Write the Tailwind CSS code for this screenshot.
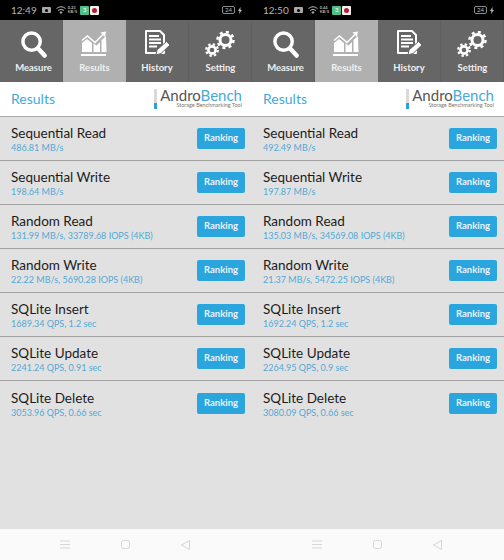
<!DOCTYPE html>
<html lang="en">
<head>
    <meta charset="UTF-8">
    <title>AndroBench Results</title>
    <script src="https://cdn.jsdelivr.net/npm/@tailwindcss/browser@4"></script>
</head>
<body class="bg-[#e2e1e1] font-['Lato',sans-serif]">
    <div id="panels" class="flex w-[504px] h-[560px] overflow-hidden"></div>

    <script>
        // --- ICONS ---
        const ICONS = {
            measure: `<svg width="27" height="29" viewBox="0 0 28 30" fill="none" stroke="white"><circle cx="12" cy="12" r="9" stroke-width="3.6"/><path d="M18.5 19 L25.5 26.5" stroke-width="4.6" stroke-linecap="round"/></svg>`,
            results: `<svg width="28" height="26" viewBox="0 0 28 26" fill="white"><path d="M1 21 V12 L6 8 L11 12 V21 Z M12.500 21 V12.500 L15.500 14.500 L19 11 V21 Z M20.500 21 V9 L25 5 L25.500 21 Z"/><path d="M0 23 H25 V25 H0 Z"/><path d="M1 9.500 L6.500 5 L14 11.500 L22 3.500" fill="none" stroke="white" stroke-width="1.500"/><path d="M19.500 1.500 L25 0.500 L24 6 Z"/></svg>`,
            history: `<svg width="27" height="28" viewBox="0 0 27 28" fill="none"><path d="M2 1 H16 L20 5 V23 H2 Z" stroke="white" stroke-width="2" stroke-linejoin="round"/><path d="M5 6 H15 M5 9.500 H17 M5 13 H17 M5 16.500 H13" stroke="white" stroke-width="2"/><path d="M12 25 L13 20 L22.500 11.500 L26 15 L17 23.500 Z" fill="white" stroke="#666" stroke-width="1"/></svg>`,
            setting: `<svg width="31" height="27" viewBox="0 0 31 27" fill="none" stroke="white"><circle cx="20.500" cy="9" r="5.500" stroke-width="3"/><circle cx="20.500" cy="9" r="8" stroke-width="2.500" stroke-dasharray="3 3.300"/><circle cx="7" cy="19" r="3.600" stroke-width="2.600"/><circle cx="7" cy="19" r="5.800" stroke-width="2.200" stroke-dasharray="2.400 2.150"/></svg>`,
        };

        const TABS = [
            { label: 'Measure', icon: ICONS.measure, shift: 'pl-[5px]' },
            { label: 'Results', icon: ICONS.results, active: true, shift: '' },
            { label: 'History', icon: ICONS.history, shift: '' },
            { label: 'Setting', icon: ICONS.setting, shift: 'pl-[1px]' },
        ];

        const NAMES = ['Sequential Read', 'Sequential Write', 'Random Read', 'Random Write', 'SQLite Insert', 'SQLite Update', 'SQLite Delete'];

        const PANELS = [
            {
                time: '12:49', speed: '0.23',
                values: ['486.81 MB/s', '198.64 MB/s', '131.99 MB/s, 33789.68 IOPS (4KB)', '22.22 MB/s, 5690.28 IOPS (4KB)', '1689.34 QPS, 1.2 sec', '2241.24 QPS, 0.91 sec', '3053.96 QPS, 0.66 sec'],
            },
            {
                time: '12:50', speed: '0.44',
                values: ['492.49 MB/s', '197.87 MB/s', '135.03 MB/s, 34569.08 IOPS (4KB)', '21.37 MB/s, 5472.25 IOPS (4KB)', '1692.24 QPS, 1.2 sec', '2264.95 QPS, 0.9 sec', '3080.09 QPS, 0.66 sec'],
            },
        ];

        const statusBar = (p) => `
            <div class="h-5 bg-black flex items-center pl-[11px] pr-[10px] text-[#b5b5b5]">
                <span class="text-[10px] leading-none">${p.time}</span>
                <span class="ml-[5px] w-[9px] h-[6px] bg-[#a8a8a8] rounded-[1px] flex items-center justify-center"><span class="w-[3px] h-[3px] rounded-full bg-black"></span></span>
                <svg class="ml-[5px]" width="10" height="8" viewBox="0 0 10 8" fill="none" stroke="#b5b5b5"><path d="M0.500 2.500 Q5 -1 9.500 2.500 M2 4.500 Q5 2 8 4.500"/><circle cx="5" cy="6.500" r="0.800" fill="#b5b5b5"/></svg>
                <span class="ml-[2px] flex flex-col text-[4px] leading-[4px] font-bold"><span>${p.speed}</span><span>KB/S</span></span>
                <span class="ml-[3px] w-[9px] h-[9px] rounded-[1px] bg-[#4fc08d] flex items-center justify-center text-[6px] leading-none text-white">3</span>
                <span class="ml-[1px] w-[9px] h-[9px] rounded-[1px] bg-[#f2f2f2] flex items-center justify-center"><span class="w-[5px] h-[5px] rounded-full bg-[#b3202c]"></span></span>
                <span class="ml-auto w-[13px] h-[8px] border border-[#8a8a8a] rounded-[2px] flex items-center justify-center text-[6px] leading-none">24</span>
                <svg class="ml-[3px]" width="4" height="7" viewBox="0 0 4 7" fill="#b5b5b5"><path d="M2.500 0 L0 4 H1.500 L1 7 L4 3 H2.500 Z"/></svg>
            </div>`;

        const tabBar = () => `
            <div class="h-[62px] flex">
                ${TABS.map(t => `
                    <div class="w-[63px] h-full flex flex-col items-center ${t.shift} ${t.active ? 'bg-[#b0b0b0]' : 'bg-[#666666] border-r border-[#5f5f5f]'}">
                        <div class="h-[36px] mt-[6px] flex items-center justify-center">${t.icon}</div>
                        <span class="text-[9.500px] leading-[12px] font-bold text-[#f0f0f0]">${t.label}</span>
                    </div>`).join('')}
            </div>`;

        const header = () => `
            <div class="h-[34px] bg-white flex items-center justify-between pl-[11px] pr-[10px] border-b border-[#a9a9a9] box-content">
                <span class="text-[14px] leading-none text-[#45a9d6]">Results</span>
                <div class="flex items-stretch h-[20px]">
                    <div class="w-[3px] mr-[3px] flex flex-col justify-end bg-[#d9d9d9]"><div class="h-[6px] bg-[#2f9fd8]"></div></div>
                    <div class="flex flex-col items-end">
                        <span class="text-[15px] leading-[13px] text-[#555555]">Andro<span class="text-[#4aa9d6]">Bench</span></span>
                        <span class="text-[5.500px] leading-[6px] text-[#777777]">Storage Benchmarking Tool</span>
                    </div>
                </div>
            </div>`;

        const row = (name, value) => `
            <div class="h-[44px] flex items-center justify-between pl-[11px] pr-[7px] border-b border-[#a3a3a3] last:border-b-0">
                <div class="flex flex-col pt-[2px]">
                    <span class="text-[13.500px] leading-[17px] text-[#1c1c1c]">${name}</span>
                    <span class="text-[9px] leading-[12px] text-[#52a9d4]">${value}</span>
                </div>
                <div class="w-[48px] h-[21px] rounded-[2px] bg-[#2ba5dd] flex items-center justify-center text-[9.500px] font-bold text-[#e8f4fb]">Ranking</div>
            </div>`;

        const navBar = () => `
            <div class="h-[31px] bg-[#fafafa] flex items-center justify-center gap-[51px] pr-[2px]">
                <svg width="10" height="9" viewBox="0 0 10 9" stroke="#d6d6d6" fill="none"><path d="M0 1 H10 M0 4.500 H10 M0 8 H10"/></svg>
                <svg width="9" height="9" viewBox="0 0 9 9" stroke="#d6d6d6" fill="none"><rect x="0.500" y="0.500" width="8" height="8" rx="2"/></svg>
                <svg width="9" height="10" viewBox="0 0 9 10" stroke="#d6d6d6" fill="none"><path d="M8.500 0.500 V9.500 L0.500 5 Z" stroke-linejoin="round"/></svg>
            </div>`;

        document.getElementById('panels').innerHTML = PANELS.map(p => `
            <div class="w-[252px] h-full flex flex-col">
                ${statusBar(p)}
                ${tabBar()}
                ${header()}
                <div class="flex-1 bg-[#e2e1e1] overflow-hidden">
                    ${NAMES.map((n, i) => row(n, p.values[i])).join('')}
                </div>
                ${navBar()}
            </div>`).join('');
    </script>
</body>
</html>
